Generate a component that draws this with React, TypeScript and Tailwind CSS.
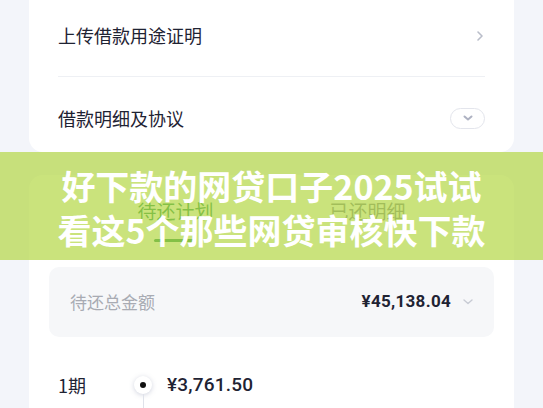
import React from 'react';

const cjk = { fontFamily: '"Noto Sans CJK SC", "Noto Sans", sans-serif' };
const num = { fontFamily: 'Roboto, "Noto Sans CJK SC", sans-serif' };

export default function App() {
  return (
    <div className="relative h-[408px] w-full overflow-hidden bg-[#f3f5fa]" style={cjk}>
      {/* Top card */}
      <div className="mx-[29px] w-[485px] rounded-b-[14px] bg-white pl-[29px] pr-[29px]">
        <div className="flex h-[77px] items-center justify-between border-b border-[#eef0f4] pb-[5px]">
          <span className="text-[18px] text-[#1f2333]">上传借款用途证明</span>
          <svg width="8" height="12" viewBox="0 0 8 12" className="mr-[1px]">
            <path d="M2 2l4 4-4 4" fill="none" stroke="#b9bdc9" strokeWidth="1.6" strokeLinecap="round" strokeLinejoin="round" />
          </svg>
        </div>
        <div className="flex h-[75px] items-center justify-between pt-[9px] pb-[2px]">
          <span className="text-[18px] text-[#1f2333]">借款明细及协议</span>
          <div className="flex h-[21px] w-[35px] items-center justify-center rounded-full border border-[#e3e5ec]">
            <svg width="12" height="8" viewBox="0 0 12 8">
              <path d="M2.5 2.5L6 5.5l3.5-3" fill="none" stroke="#aeb2c2" strokeWidth="2" strokeLinecap="round" strokeLinejoin="round" />
            </svg>
          </div>
        </div>
      </div>

      {/* Second card */}
      <div className="mx-[29px] mt-[23px] w-[485px] rounded-t-[14px] bg-white pb-8">
        <div className="flex justify-center gap-[116px] pt-[23px]">
          <div className="flex flex-col items-center">
            <span className="text-[19px] leading-[26px] text-[#168a4a]">待还计划</span>
            <div className="mt-[15px] h-[3px] w-[42px] rounded-full bg-[#168a4a]" />
          </div>
          <span className="text-[19px] leading-[26px] text-[#7a7f8c]">已还明细</span>
        </div>

        <div className="mx-[20px] mt-[25px] flex h-[70px] items-center justify-between rounded-[10px] bg-[#f6f7f9] pl-[21px] pr-[21px]">
          <span className="text-[17px] text-[#a8abb3]">待还总金额</span>
          <div className="flex items-center gap-[12px]">
            <span className="text-[17px] font-bold tracking-[0.3px] text-[#1f2333]" style={num}>¥45,138.04</span>
            <svg width="10" height="6" viewBox="0 0 10 6">
              <path d="M1 1l4 3.5L9 1" fill="none" stroke="#c8cbd4" strokeWidth="1.4" strokeLinecap="round" strokeLinejoin="round" />
            </svg>
          </div>
        </div>

        <div className="mt-[35px] flex pl-[29px]">
          <div className="w-[76px]">
            <div className="text-[18px] leading-[26px] text-[#1f2333]">1期</div>
            <div className="mt-[8px] text-[13px] text-[#9a9ea8]" style={num}>2024/08/20</div>
          </div>
          <div className="flex flex-col items-center">
            <div className="mt-[4px] flex h-[18px] w-[18px] items-center justify-center rounded-full bg-white shadow-[0_1px_5px_rgba(120,130,160,0.35)]">
              <div className="h-[6px] w-[6px] rounded-full bg-[#111]" />
            </div>
            <div className="h-[40px] w-px bg-[#dfe2ea]" />
          </div>
          <div className="ml-[15px]">
            <div className="text-[19px] font-medium leading-[26px] tracking-[0.2px] text-[#1f2333]" style={num}>¥3,761.50</div>
            <div className="mt-[8px] text-[13px] text-[#9a9ea8]">本金 ¥3,510.00　利息 ¥251.50</div>
          </div>
        </div>
      </div>

      {/* Overlay banner */}
      <div className="absolute left-0 right-0 top-[152px] h-[108px] bg-[#b3d745]/70 pt-[12px] text-center">
        <div className="text-[34px] font-bold leading-[43.5px] text-white">
          好下款的网贷口子2025试试
          <br />
          看这5个那些网贷审核快下款
        </div>
      </div>
    </div>
  );
}
